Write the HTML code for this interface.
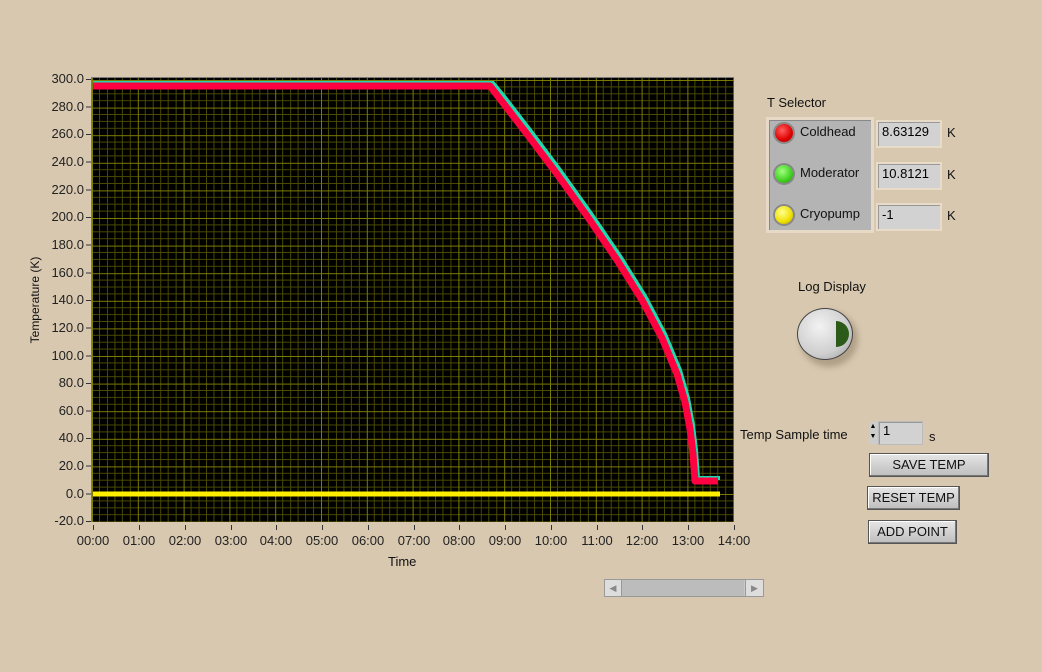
<!DOCTYPE html>
<html><head><meta charset="utf-8"><style>
body{margin:0;width:1042px;height:672px;background:#d8c8b0;font-family:"Liberation Sans",sans-serif;position:relative;overflow:hidden}
.a{position:absolute;font-size:13px;color:#111}
.yl{position:absolute;left:40px;width:44px;text-align:right;font-size:13px;color:#222}
.xl{position:absolute;top:533px;font-size:13px;color:#222;width:50px;text-align:center}
.btn{position:absolute;background:linear-gradient(#e6e6e6,#bdbdbd);border:1px solid #555;box-shadow:inset -1px -1px 0 #777,inset 1px 1px 0 #fff;font-size:13px;text-align:center;color:#111}
.num{position:absolute;background:#d2d2d2;border:2px solid #e8dcc8;box-shadow:inset 1px 1px 0 #999;font-size:13px;padding-left:4px;box-sizing:border-box;line-height:20px}
.led{position:absolute;width:18px;height:18px;border-radius:50%;box-shadow:0 0 0 2px #888}
</style></head><body>
<svg style="position:absolute;left:0;top:0" width="1042" height="672" shape-rendering="crispEdges">
<defs>
<pattern id="g" x="92" y="80" width="45.8" height="27.6" patternUnits="userSpaceOnUse">
<g stroke="#4a4a00" stroke-width="1">
<line x1="7.6" y1="0" x2="7.6" y2="27.6"/><line x1="15.3" y1="0" x2="15.3" y2="27.6"/><line x1="22.9" y1="0" x2="22.9" y2="27.6"/><line x1="30.5" y1="0" x2="30.5" y2="27.6"/><line x1="38.2" y1="0" x2="38.2" y2="27.6"/>
<line x1="0" y1="6.9" x2="45.8" y2="6.9"/><line x1="0" y1="13.8" x2="45.8" y2="13.8"/><line x1="0" y1="20.7" x2="45.8" y2="20.7"/>
</g>
<g stroke="#7c7c00" stroke-width="1"><line x1="0.5" y1="0" x2="0.5" y2="27.6"/><line x1="0" y1="0.5" x2="45.8" y2="0.5"/></g>
</pattern>
</defs>
<rect x="91" y="77" width="643" height="445" fill="#7a7a7a"/>
<rect x="92" y="78" width="642" height="444" fill="#000"/>
<rect x="92" y="78" width="642" height="444" fill="url(#g)"/>
<g shape-rendering="auto">
<line x1="93" y1="494" x2="720" y2="494" stroke="#ffee00" stroke-width="5"/>
<polyline fill="none" stroke="#20d8b0" stroke-width="4" points="93,83 493,83 503,95 530,130 560,170 590,212 620,256 645,296 665,334 680,370 688,398 693,425 696,450 698,478 720,478"/>
<polyline fill="none" stroke="#ff0040" stroke-width="7" stroke-linejoin="round" points="93,86 490,86 500,99 527,134 557,174 587,216 617,260 642,300 662,338 677,374 685,402 690,429 693,454 695,481 718,481"/>
</g>
<g stroke="#333" stroke-width="1">
<line x1="86" y1="79.5" x2="91" y2="79.5"/><line x1="86" y1="107" x2="91" y2="107"/><line x1="86" y1="134.5" x2="91" y2="134.5"/><line x1="86" y1="162" x2="91" y2="162"/><line x1="86" y1="190" x2="91" y2="190"/><line x1="86" y1="217.5" x2="91" y2="217.5"/><line x1="86" y1="245" x2="91" y2="245"/><line x1="86" y1="273" x2="91" y2="273"/><line x1="86" y1="300.5" x2="91" y2="300.5"/><line x1="86" y1="328" x2="91" y2="328"/><line x1="86" y1="356" x2="91" y2="356"/><line x1="86" y1="383.5" x2="91" y2="383.5"/><line x1="86" y1="411" x2="91" y2="411"/><line x1="86" y1="438.5" x2="91" y2="438.5"/><line x1="86" y1="466" x2="91" y2="466"/><line x1="86" y1="494" x2="91" y2="494"/><line x1="86" y1="521.5" x2="91" y2="521.5"/>
</g>
<g stroke="#333"><path d="M93.5 525v5M139.5 525v5M185.5 525v5M231.5 525v5M276.5 525v5M322.5 525v5M368.5 525v5M414.5 525v5M459.5 525v5M505.5 525v5M551.5 525v5M597.5 525v5M642.5 525v5M688.5 525v5M734.5 525v5"/></g>
</svg>
<div class="yl" style="top:71px">300.0</div><div class="yl" style="top:99px">280.0</div><div class="yl" style="top:126px">260.0</div><div class="yl" style="top:154px">240.0</div><div class="yl" style="top:182px">220.0</div><div class="yl" style="top:209px">200.0</div><div class="yl" style="top:237px">180.0</div><div class="yl" style="top:265px">160.0</div><div class="yl" style="top:292px">140.0</div><div class="yl" style="top:320px">120.0</div><div class="yl" style="top:348px">100.0</div><div class="yl" style="top:375px">80.0</div><div class="yl" style="top:403px">60.0</div><div class="yl" style="top:430px">40.0</div><div class="yl" style="top:458px">20.0</div><div class="yl" style="top:486px">0.0</div><div class="yl" style="top:513px">-20.0</div>
<div class="xl" style="left:68px">00:00</div><div class="xl" style="left:114px">01:00</div><div class="xl" style="left:160px">02:00</div><div class="xl" style="left:206px">03:00</div><div class="xl" style="left:251px">04:00</div><div class="xl" style="left:297px">05:00</div><div class="xl" style="left:343px">06:00</div><div class="xl" style="left:389px">07:00</div><div class="xl" style="left:434px">08:00</div><div class="xl" style="left:480px">09:00</div><div class="xl" style="left:526px">10:00</div><div class="xl" style="left:572px">11:00</div><div class="xl" style="left:617px">12:00</div><div class="xl" style="left:663px">13:00</div><div class="xl" style="left:709px">14:00</div>
<div class="a" style="left:388px;top:554px">Time</div>
<div class="a" style="left:-15px;top:293px;transform:rotate(-90deg);width:100px;text-align:center;font-size:12px">Temperature (K)</div>
<div style="position:absolute;left:604px;top:579px;width:160px;height:18px;background:#c8c8c8;border:1px solid #999;box-sizing:border-box"></div>
<div style="position:absolute;left:604px;top:579px;width:18px;height:18px;background:#ddd;border:1px solid #999;box-sizing:border-box;font-size:9px;color:#888;text-align:center;line-height:16px">◀</div>
<div style="position:absolute;left:745px;top:579px;width:19px;height:18px;background:#ddd;border:1px solid #999;box-sizing:border-box;font-size:9px;color:#888;text-align:center;line-height:16px">▶</div>
<div style="position:absolute;left:622px;top:580px;width:122px;height:16px;background:#bcbcbc"></div>
<div class="a" style="left:767px;top:95px">T Selector</div>
<div style="position:absolute;left:766px;top:117px;width:108px;height:116px;background:#b4b4b4;border:3px solid #e6dac6;box-sizing:border-box;box-shadow:inset 1px 1px 0 #888"></div>
<div class="led" style="left:775px;top:124px;background:radial-gradient(circle at 40% 35%,#ff6060,#e00000 60%,#900)"></div>
<div class="led" style="left:775px;top:165px;background:radial-gradient(circle at 40% 35%,#a0ff80,#40d020 60%,#208010)"></div>
<div class="led" style="left:775px;top:206px;background:radial-gradient(circle at 40% 35%,#ffff90,#f0e000 60%,#a09000)"></div>
<div class="a" style="left:800px;top:124px">Coldhead</div>
<div class="a" style="left:800px;top:165px">Moderator</div>
<div class="a" style="left:800px;top:206px">Cryopump</div>
<div class="num" style="left:876px;top:120px;width:66px;height:28px">8.63129</div>
<div class="num" style="left:876px;top:162px;width:66px;height:28px">10.8121</div>
<div class="num" style="left:876px;top:203px;width:66px;height:28px">-1</div>
<div class="a" style="left:947px;top:125px">K</div><div class="a" style="left:947px;top:167px">K</div><div class="a" style="left:947px;top:208px">K</div>
<div class="a" style="left:798px;top:279px">Log Display</div>
<div style="position:absolute;left:800px;top:311px;width:58px;height:56px;border-radius:50%;background:#b0a088;filter:blur(3px)"></div>
<div style="position:absolute;left:797px;top:308px;width:56px;height:52px;border-radius:50%;background:radial-gradient(circle at 40% 35%,#f2f2f2,#cfcfcf 60%,#999);border:1px solid #444;box-sizing:border-box"></div>
<div style="position:absolute;left:836px;top:321px;width:13px;height:26px;background:#2c5a18;border-radius:0 13px 13px 0"></div>
<div class="a" style="left:740px;top:427px">Temp Sample time</div>
<div style="position:absolute;left:869px;top:422px;width:8px;height:22px;background:#ccc;font-size:7px;line-height:10px;text-align:center">▲<br>▼</div>
<div class="num" style="left:878px;top:421px;width:45px;height:24px;line-height:18px;border-width:1px;border-color:#bbb">1</div>
<div class="a" style="left:929px;top:429px">s</div>
<div class="btn" style="left:869px;top:453px;width:118px;height:22px;line-height:22px">SAVE TEMP</div>
<div class="btn" style="left:867px;top:486px;width:91px;height:22px;line-height:22px">RESET TEMP</div>
<div class="btn" style="left:868px;top:520px;width:87px;height:22px;line-height:22px">ADD POINT</div>
</body></html>
